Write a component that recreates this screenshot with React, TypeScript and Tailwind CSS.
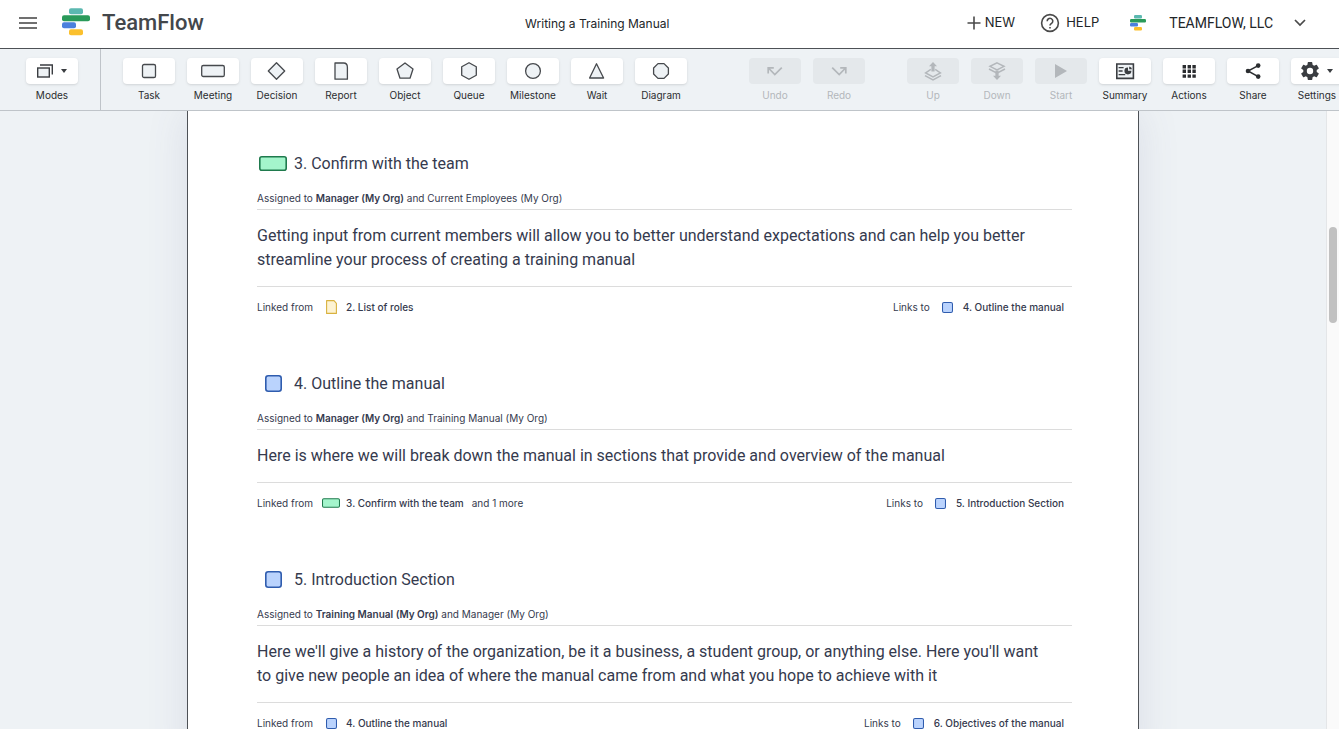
import type { ReactNode } from 'react'
import { clsx } from 'clsx'

type Kind = 'task' | 'meeting' | 'report'

type LinkRef = { kind: Kind; label: string; more?: string }

type Step = {
  kind: Kind
  title: string
  assignee: string
  others: string
  body: string
  from: LinkRef
  to: LinkRef
}

const steps: Step[] = [
  {
    kind: 'meeting',
    title: '3. Confirm with the team',
    assignee: 'Manager (My Org)',
    others: 'Current Employees (My Org)',
    body: 'Getting input from current members will allow you to better understand expectations and can help you better streamline your process of creating a training manual',
    from: { kind: 'report', label: '2. List of roles' },
    to: { kind: 'task', label: '4. Outline the manual' },
  },
  {
    kind: 'task',
    title: '4. Outline the manual',
    assignee: 'Manager (My Org)',
    others: 'Training Manual (My Org)',
    body: 'Here is where we will break down the manual in sections that provide and overview of the manual',
    from: { kind: 'meeting', label: '3. Confirm with the team', more: 'and 1 more' },
    to: { kind: 'task', label: '5. Introduction Section' },
  },
  {
    kind: 'task',
    title: '5. Introduction Section',
    assignee: 'Training Manual (My Org)',
    others: 'Manager (My Org)',
    body: "Here we'll give a history of the organization, be it a business, a student group, or anything else. Here you'll want to give new people an idea of where the manual came from and what you hope to achieve with it",
    from: { kind: 'task', label: '4. Outline the manual' },
    to: { kind: 'task', label: '6. Objectives of the manual' },
  },
]

function Logo({ className }: { className?: string }) {
  return (
    <svg viewBox="0 0 28 28" className={className} aria-hidden="true">
      <rect x="7" y="0.2" width="14" height="6" rx="2" fill="#5bb8b0" />
      <rect x="0" y="7.2" width="28" height="6" rx="2" fill="#2a9a5a" />
      <rect x="0" y="14.2" width="14" height="6" rx="2" fill="#4c80dd" />
      <rect x="7" y="21.2" width="14" height="6" rx="2" fill="#fbc02d" />
    </svg>
  )
}

// 24x24 outline shapes used by the toolbar
function Shape({ children }: { children: ReactNode }) {
  return (
    <svg
      width="24"
      height="24"
      viewBox="0 0 24 24"
      fill="#eef2f5"
      stroke="#46494d"
      strokeWidth="1.3"
      strokeLinejoin="round"
      aria-hidden="true"
    >
      {children}
    </svg>
  )
}

function Glyph({ children }: { children: ReactNode }) {
  return (
    <svg width="24" height="24" viewBox="0 0 24 24" fill="currentColor" aria-hidden="true">
      {children}
    </svg>
  )
}

function Caret() {
  return (
    <svg width="6" height="4" viewBox="0 0 6 4" fill="#3a3d41" aria-hidden="true">
      <path d="M0 0h6L3 4z" />
    </svg>
  )
}

function StepIcon({ kind, small }: { kind: Kind; small?: boolean }) {
  const box = clsx('flex shrink-0 justify-center', small ? 'w-5' : 'w-8')
  if (kind === 'meeting') {
    return (
      <span className={box}>
        <svg width={small ? 18 : 28} height={small ? 10 : 15} viewBox="0 0 28 15" aria-hidden="true">
          <rect x="0.8" y="0.8" width="26.4" height="13.4" rx="2" fill="#a4f5cc" stroke="#1f7a4d" strokeWidth="1.6" />
        </svg>
      </span>
    )
  }
  if (kind === 'report') {
    return (
      <span className={box}>
        <svg width="11" height="14" viewBox="0 0 11 14" aria-hidden="true">
          <path d="M.6.6h7.4l2.4 2.8v10H.6z" fill="#fdf3d3" stroke="#d9b23f" strokeWidth="1.1" strokeLinejoin="round" />
        </svg>
      </span>
    )
  }
  return (
    <span className={box}>
      <svg width={small ? 11 : 17} height={small ? 11 : 17} viewBox="0 0 17 17" aria-hidden="true">
        <rect x="0.8" y="0.8" width="15.4" height="15.4" rx="2.4" fill="#bad3fd" stroke="#2f5cae" strokeWidth="1.6" />
      </svg>
    </span>
  )
}

function Tool({ label, disabled, children }: { label: string; disabled?: boolean; children: ReactNode }) {
  return (
    <button
      type="button"
      disabled={disabled}
      className={clsx(
        'flex w-[52px] shrink-0 flex-col items-center gap-[3px] text-[10px] leading-4',
        disabled ? 'text-[#b3b7bb]' : 'text-[#2b2d30]'
      )}
    >
      <span
        className={clsx(
          'flex h-[26px] w-full items-center justify-center gap-2 rounded',
          disabled ? 'bg-[#e4e8eb]' : 'bg-white shadow-sm'
        )}
      >
        {children}
      </span>
      <span className="whitespace-nowrap">{label}</span>
    </button>
  )
}

function Header() {
  return (
    <header className="flex h-[49px] shrink-0 items-center border-b border-[#4d5156] bg-white pr-8 pb-0.5 pl-[19px] text-[#222528]">
      <button type="button" aria-label="Menu">
        <svg width="18" height="12" viewBox="0 0 18 12" fill="#707070" aria-hidden="true">
          <path d="M0 0h18v2H0zM0 5h18v2H0zM0 10h18v2H0z" />
        </svg>
      </button>
      <a href="#" className="ml-[25px] flex items-center gap-3 pb-0.5">
        <Logo className="size-7" />
        <span className="font-[Roboto,sans-serif] text-[22px] font-medium text-[#43474b]">TeamFlow</span>
      </a>
      <h1 className="flex-1 pt-0.5 pl-6 text-center text-xs">Writing a Training Manual</h1>
      <button type="button" className="flex items-center gap-1 text-[13px]">
        <svg width="14" height="14" viewBox="0 0 14 14" stroke="#4a4a4a" strokeWidth="1.6" aria-hidden="true">
          <path d="M7 .5v13M.5 7h13" />
        </svg>
        NEW
      </button>
      <button type="button" className="ml-[25px] flex items-center gap-1.5 text-[13px]">
        <svg width="20" height="20" viewBox="0 0 20 20" fill="none" stroke="#4a4a4a" strokeWidth="1.6" aria-hidden="true">
          <circle cx="10" cy="10" r="8.4" />
          <path d="M7.2 8.2a2.8 2.8 0 1 1 4.4 2.2c-1 .7-1.6 1.1-1.6 2.1M10 13.9v1.7" />
        </svg>
        HELP
      </button>
      <button type="button" className="ml-[31px] flex items-center text-sm">
        <Logo className="size-4" />
        <span className="ml-[23px] font-[Roboto,sans-serif]">TEAMFLOW, LLC</span>
        <svg width="14" height="8" viewBox="0 0 14 8" className="ml-5" fill="none" stroke="#4a4a4a" strokeWidth="1.7" aria-hidden="true">
          <path d="M2 1l5 5 5-5" />
        </svg>
      </button>
    </header>
  )
}

function Toolbar() {
  return (
    <div className="flex h-[62px] shrink-0 overflow-hidden border-b border-[#bfc4c9] bg-[#eef2f5]">
      <div className="flex w-[101px] shrink-0 border-r border-[#bfc4c9] pt-[9px] pl-[26px]">
        <Tool label="Modes">
          <svg width="16" height="14" viewBox="0 0 16 14" fill="#eef2f5" stroke="#3a3d41" strokeWidth="1.4" aria-hidden="true">
            <path d="M3 1h12.3v9.5" fill="none" />
            <rect x="0.7" y="4" width="11.6" height="9" />
          </svg>
          <Caret />
        </Tool>
      </div>
      <div className="flex flex-1 gap-3 pt-[9px] pl-[22px]">
        <Tool label="Task">
          <Shape><rect x="5.5" y="5.5" width="13" height="13" rx="1.6" /></Shape>
        </Tool>
        <Tool label="Meeting">
          <Shape><rect x="0.7" y="6.5" width="22.6" height="11" rx="1.6" /></Shape>
        </Tool>
        <Tool label="Decision">
          <Shape><path d="M11.5 3.8l8.2 8.2-8.2 8.2L3.3 12z" /></Shape>
        </Tool>
        <Tool label="Report">
          <Shape><path d="M6 4h8.6q3.8 0 3.8 4.4v11.8H6z" /></Shape>
        </Tool>
        <Tool label="Object">
          <Shape><path d="M12 4l8 6-3 9.2H7L4 10z" /></Shape>
        </Tool>
        <Tool label="Queue">
          <Shape><path d="M12 3.7l7.3 4.1v8.4L12 20.3l-7.3-4.1V7.8z" /></Shape>
        </Tool>
        <Tool label="Milestone">
          <Shape><circle cx="12" cy="12" r="7.4" /></Shape>
        </Tool>
        <Tool label="Wait">
          <Shape><path d="M11.5 4.8l7.1 14.2H4.6z" /></Shape>
        </Tool>
        <Tool label="Diagram">
          <Shape><path d="M9 4.6h6l4.4 4.4v6L15 19.4H9L4.6 15V9z" /></Shape>
        </Tool>
        <div className="ml-auto flex gap-3 pl-[50px]">
          <Tool label="Undo" disabled>
            <svg width="24" height="24" viewBox="0 0 24 24" fill="none" stroke="#b3b7bb" strokeWidth="1.7" aria-hidden="true">
              <path d="M5.2 14.5V8.8h5.6M5.4 9l6.4 6.6 7-7" />
            </svg>
          </Tool>
          <Tool label="Redo" disabled>
            <svg width="24" height="24" viewBox="0 0 24 24" fill="none" stroke="#b3b7bb" strokeWidth="1.7" aria-hidden="true">
              <path d="M18.8 14.5V8.8h-5.6M18.6 9l-6.4 6.6-7-7" />
            </svg>
          </Tool>
        </div>
        <div className="flex gap-3 pl-[30px]">
          <Tool label="Up" disabled>
            <Glyph>
              <path d="M12 3l4 4.2h-2.4v5.3h-3.2V7.2H8z" />
              <path d="M9.8 10.4L4.6 14l7.4 4 7.4-4-5.2-3.6M4 16.6l8 4.3 8-4.3" fill="none" stroke="currentColor" strokeWidth="1.5" />
            </Glyph>
          </Tool>
          <Tool label="Down" disabled>
            <Glyph>
              <path d="M12 21l-4-4.2h2.4v-5.3h3.2v5.3H16z" />
              <path d="M12 3.8l7 3.5-7 3.6-7-3.6zM4 10l8 4.2 8-4.2" fill="none" stroke="currentColor" strokeWidth="1.5" />
            </Glyph>
          </Tool>
          <Tool label="Start" disabled>
            <Glyph><path d="M6 5l12 7-12 7z" /></Glyph>
          </Tool>
          <Tool label="Summary">
            <Glyph>
              <path d="M3.8 5h16.6v14.4H3.8z" fill="#eef2f5" stroke="#3a3d41" strokeWidth="1.6" />
              <path d="M5.6 8.6h5M5.6 12h4M5.6 15.6h6.6" fill="none" stroke="#3a3d41" strokeWidth="1.3" />
              <path d="M15 8.4v3.4h3.4A3.5 3.5 0 1 1 15 8.4z" fill="#3a3d41" />
              <path d="M16.2 7.4a3.2 3.2 0 0 1 2.8 2.9h-2.8z" fill="#3a3d41" />
            </Glyph>
          </Tool>
          <Tool label="Actions">
            <Glyph>
              <path d="M5.6 6h3.4v3.4H5.6zM10.6 6H14v3.4h-3.4zM15.4 6h3.4v3.4h-3.4zM5.6 10.6h3.4V14H5.6zM10.6 10.6H14V14h-3.4zM15.4 10.6h3.4V14h-3.4zM5.6 15.4h3.4v3.4H5.6zM10.6 15.4H14v3.4h-3.4zM15.4 15.4h3.4v3.4h-3.4z" />
            </Glyph>
          </Tool>
          <Tool label="Share">
            <Glyph>
              <path d="M17.2 6.6L7 12l10.2 5.6" fill="none" stroke="currentColor" strokeWidth="1.5" />
              <circle cx="17.2" cy="6.6" r="2.3" />
              <circle cx="7" cy="12" r="2.3" />
              <circle cx="17.2" cy="17.6" r="2.3" />
            </Glyph>
          </Tool>
          <Tool label="Settings">
            <svg width="18" height="18" viewBox="2.4 2.4 19.2 19.2" fill="#3a3d41" aria-hidden="true">
              <path d="M19.14 12.94c.04-.3.06-.61.06-.94 0-.32-.02-.64-.07-.94l2.03-1.58a.49.49 0 0 0 .12-.61l-1.92-3.32a.49.49 0 0 0-.59-.22l-2.39.96c-.5-.38-1.03-.7-1.62-.94l-.36-2.54a.48.48 0 0 0-.48-.41h-3.84a.47.47 0 0 0-.47.41l-.36 2.54c-.59.24-1.13.57-1.62.94l-2.39-.96a.48.48 0 0 0-.59.22L2.74 8.87a.47.47 0 0 0 .12.61l2.03 1.58c-.05.3-.09.63-.09.94s.02.64.07.94l-2.03 1.58a.49.49 0 0 0-.12.61l1.92 3.32c.12.22.37.29.59.22l2.39-.96c.5.38 1.03.7 1.62.94l.36 2.54c.05.24.24.41.48.41h3.84c.24 0 .44-.17.47-.41l.36-2.54c.59-.24 1.13-.56 1.62-.94l2.39.96c.22.08.47 0 .59-.22l1.92-3.32a.47.47 0 0 0-.12-.61zM12 15.4a3.4 3.4 0 1 1 0-6.8 3.4 3.4 0 0 1 0 6.8z" />
            </svg>
            <Caret />
          </Tool>
        </div>
      </div>
    </div>
  )
}

function StepLink({ item, caption }: { item: LinkRef; caption: string }) {
  return (
    <div className="flex items-center">
      <span>{caption}</span>
      <a href="#" className="ml-2 flex items-center gap-[5px] font-medium">
        <StepIcon kind={item.kind} small />
        {item.label}
      </a>
      {item.more && <span className="ml-2">{item.more}</span>}
    </div>
  )
}

function StepSection({ step }: { step: Step }) {
  return (
    <section className="text-[10px] leading-4">
      <h2 className="flex h-8 items-center gap-[5px] font-[Roboto,sans-serif] text-base">
        <StepIcon kind={step.kind} />
        <span className="pt-0.5">{step.title}</span>
      </h2>
      <p className="mt-[11px] border-b border-[#dcdcdc] pb-[3px]">
        Assigned to <strong className="font-semibold">{step.assignee}</strong> and {step.others}
      </p>
      <p className="border-b border-[#dcdcdc] py-3.5 pr-5 font-[Roboto,sans-serif] text-base leading-6">
        {step.body}
      </p>
      <div className="flex justify-between pt-3 pr-2">
        <StepLink caption="Linked from" item={step.from} />
        <StepLink caption="Links to" item={step.to} />
      </div>
    </section>
  )
}

export default function App() {
  return (
    <div className="flex h-screen flex-col overflow-hidden font-[Inter,sans-serif]">
      <Header />
      <Toolbar />
      <div className="flex min-h-0 flex-1 bg-[#eef2f5]">
        <main className="flex flex-1 justify-center overflow-hidden">
          <article className="flex w-full max-w-[952px] flex-col gap-[52px] self-start border-x border-[#4d5156] bg-white pt-9 pr-[66px] pb-9 pl-[69px] text-[#353a4e] shadow-[0_0_40px_rgba(80,80,130,0.12)]">
            {steps.map((step) => (
              <StepSection key={step.title} step={step} />
            ))}
          </article>
        </main>
        <div className="w-[13px] shrink-0 border-l border-[#e4e6e8] bg-[#fafafa] pt-29 pl-0.5">
          <div className="h-24 w-2 rounded-full bg-[#c1c1c1]" />
        </div>
      </div>
    </div>
  )
}
